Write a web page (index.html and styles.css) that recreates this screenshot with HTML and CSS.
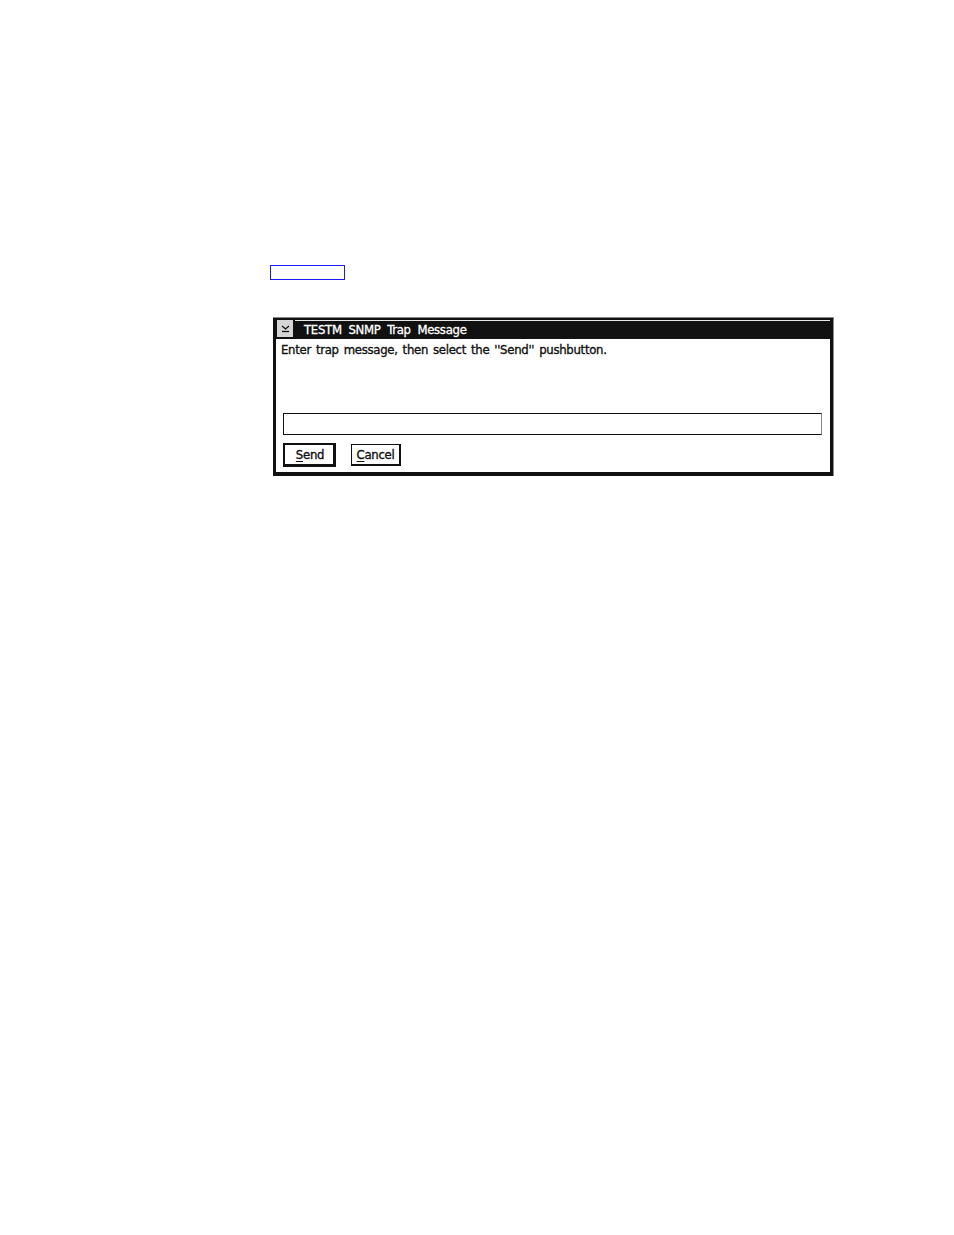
FILE: index.html
```html
<!DOCTYPE html>
<html>
<head>
<meta charset="utf-8">
<title>TESTM SNMP Trap Message</title>
<link rel="stylesheet" href="styles.css">
</head>
<body>
<div class="page">
  <div class="link-box"></div>
  <div class="window">
    <div class="frame">
      <div class="titlebar">
        <div class="sysmenu">
          <svg width="9" height="8" viewBox="0 0 9 8"><path d="M1 1 L4.5 4 L8 1" fill="none" stroke="#111" stroke-width="1.3"/><path d="M1 6.5 H8" stroke="#111" stroke-width="1.3"/></svg>
        </div>
        <div class="title">TESTM SNMP Trap Message</div>
      </div>
      <div class="client">
        <p class="prompt">Enter trap message, then select the ''Send'' pushbutton.</p>
        <div class="entry"></div>
        <div class="buttons">
          <div class="btn btn-default"><span class="mn">S</span>end</div>
          <div class="btn btn-cancel"><span class="mn">C</span>ancel</div>
        </div>
      </div>
    </div>
  </div>
</div>
</body>
</html>
```
FILE: styles.css
```css
html, body {
  margin: 0;
  padding: 0;
  background: #fff;
}
.page {
  padding: 265px 0 0 270px;
  font-family: "DejaVu Sans Condensed", "Liberation Sans", sans-serif;
  color: #111;
}
.link-box {
  width: 75px;
  height: 15px;
  box-sizing: border-box;
  border: 1.5px solid #1a1aff;
}
.window {
  margin: 37px 0 0 3px;
  width: 561px;
  box-sizing: border-box;
  border-top: 1px solid #8a8a8a;
  border-right: 1px solid #8a8a8a;
}
.frame {
  border: 3px solid #111;
  border-top-width: 2px;
  border-bottom-width: 4px;
  background: #fff;
}
.titlebar {
  display: flex;
  height: 18px;
  background: #111;
  border-bottom: 1px solid #111;
}
.sysmenu {
  width: 16px;
  height: 17px;
  margin-left: 1px;
  background: #d6d6d6;
  display: flex;
  align-items: center;
  justify-content: center;
}
.title {
  flex: 1;
  margin-left: 2px;
  border-top: 1px solid #e8e8e8;
  color: #fff;
  font-size: 13px;
  line-height: 18px;
  height: 17px;
  overflow: hidden;
  padding-left: 9px;
  letter-spacing: -0.3px;
  word-spacing: 3.3px;
  -webkit-text-stroke: 0.3px #fff;
}
.client {
  padding: 3px 8px 5px 5px;
}
.prompt {
  margin: 0;
  font-size: 13px;
  line-height: 16px;
  letter-spacing: -0.3px;
  word-spacing: 1.6px;
  -webkit-text-stroke: 0.35px #111;
}
.entry {
  margin: 55px 0 0 2px;
  height: 22px;
  box-sizing: border-box;
  border: 1px solid #111;
  border-right-color: #888;
}
.buttons {
  display: flex;
  align-items: flex-start;
  gap: 15px;
  margin: 8px 0 0 2px;
}
.btn {
  box-sizing: border-box;
  width: 50px;
  height: 22px;
  border: 1px solid #111;
  border-right-width: 2px;
  border-bottom-width: 2px;
  font-size: 13px;
  line-height: 19px;
  text-align: center;
  letter-spacing: -0.3px;
  -webkit-text-stroke: 0.35px #111;
}
.btn-cancel {
  margin-top: 1px;
}
.btn-default {
  width: 53px;
  height: 24px;
  border: 2px solid #111;
  border-right-width: 3px;
  border-bottom-width: 3px;
  line-height: 19px;
  padding-left: 2px;
}
.mn {
  text-decoration: underline;
  text-underline-offset: 2px;
}
```
